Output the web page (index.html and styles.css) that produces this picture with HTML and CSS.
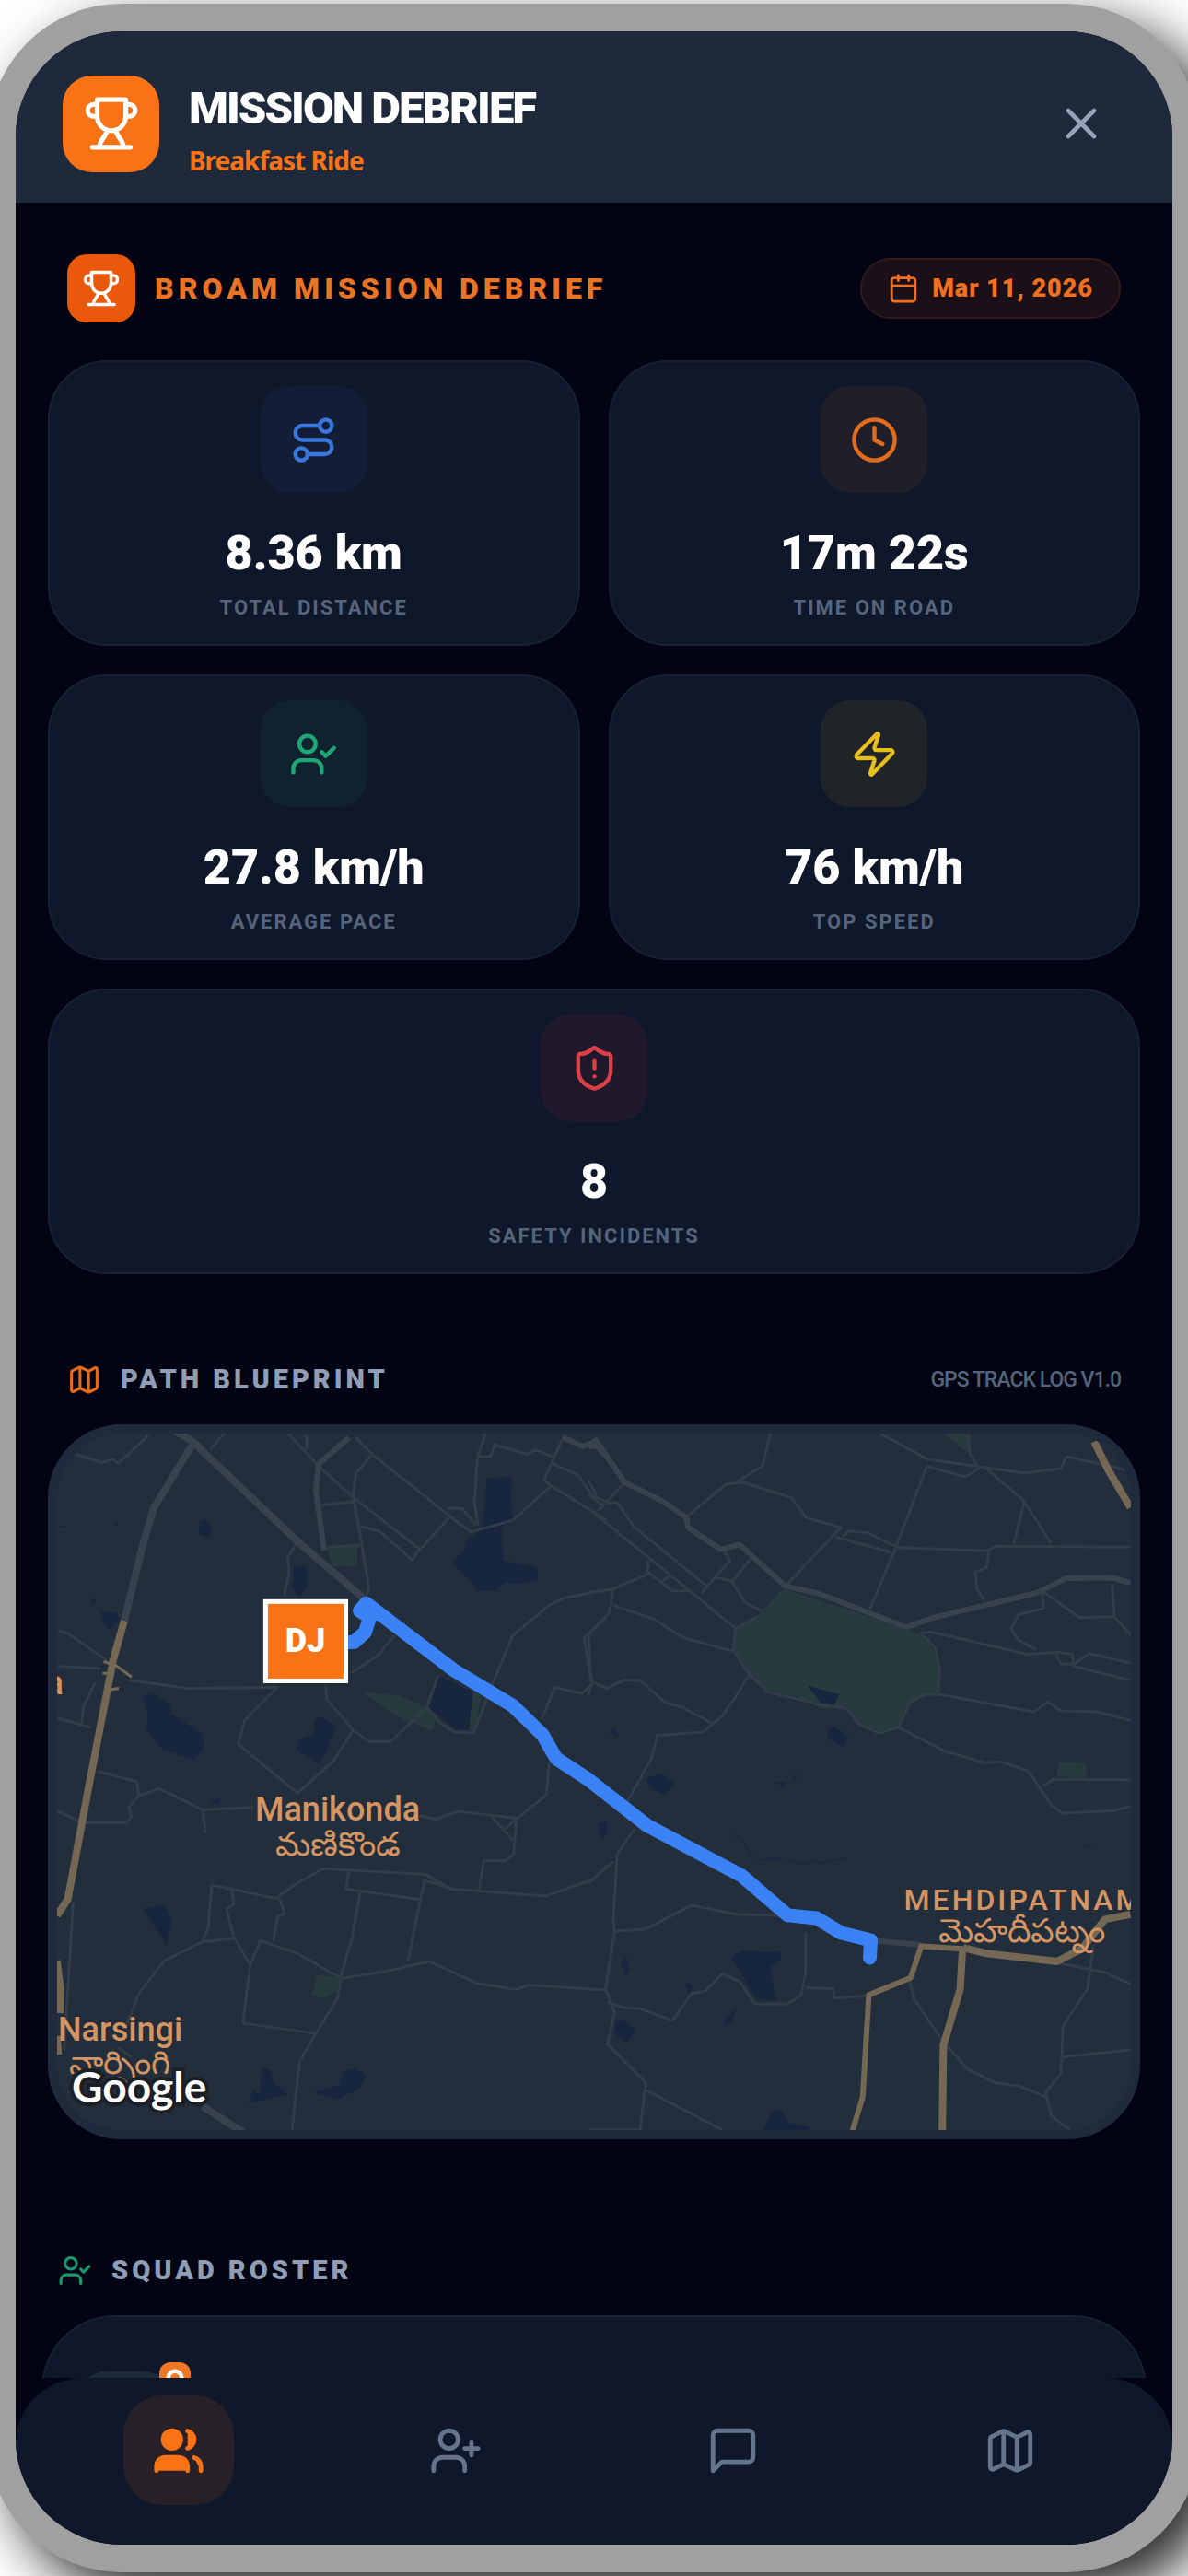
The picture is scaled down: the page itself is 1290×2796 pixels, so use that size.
FILE: index.html
```html
<!DOCTYPE html>
<html lang="en">
<head>
  <meta charset="utf-8">
  <meta name="viewport" content="width=device-width, initial-scale=1">
  <title>Mission Debrief</title>
  <link rel="stylesheet" href="styles.css">
</head>
<body>
  <!-- shared icons -->
  <svg class="sprite" aria-hidden="true">
    <symbol id="trophy" viewBox="0 0 24 24">
      <path d="M6 9H4.5a2.5 2.5 0 0 1 0-5H6M18 9h1.5a2.5 2.5 0 0 0 0-5H18M4 22h16M18 2H6v7a6 6 0 0 0 12 0V2ZM10 14.7c0 3.3-3 3.6-3 7.3M14 14.7c0 3.3 3 3.6 3 7.3"/>
    </symbol>
    <symbol id="map" viewBox="0 0 24 24">
      <path d="M14.106 5.553a2 2 0 0 0 1.788 0l3.659-1.83A1 1 0 0 1 21 4.619v12.764a1 1 0 0 1-.553.894l-4.553 2.277a2 2 0 0 1-1.788 0l-4.212-2.106a2 2 0 0 0-1.788 0l-3.659 1.83A1 1 0 0 1 3 19.381V6.618a1 1 0 0 1 .553-.894l4.553-2.277a2 2 0 0 1 1.788 0zM15 5.764v15M9 3.236v15"/>
    </symbol>
    <symbol id="user-check" viewBox="0 0 24 24">
      <path d="m16 11 2 2 4-4M16 21v-2a4 4 0 0 0-4-4H6a4 4 0 0 0-4 4v2"/>
      <circle cx="9" cy="7" r="4"/>
    </symbol>
  </svg>

  <div class="device">
    <header class="topbar">
      <span class="logo"><svg class="icon"><use href="#trophy"/></svg></span>
      <div class="titles">
        <h1>MISSION DEBRIEF</h1>
        <p>Breakfast Ride</p>
      </div>
      <button class="close" aria-label="Close">
        <svg class="icon" viewBox="0 0 24 24"><path d="M18 6 6 18M6 6l12 12"/></svg>
      </button>
    </header>

    <main class="content">
      <div class="debrief">
        <span class="logo small"><svg class="icon"><use href="#trophy"/></svg></span>
        <h2>BROAM MISSION DEBRIEF</h2>
        <span class="date">
          <svg class="icon" viewBox="0 0 24 24"><path d="M8 2v4M16 2v4M3 10h18"/><rect x="3" y="4" width="18" height="18" rx="2"/></svg>
          Mar 11, 2026
        </span>
      </div>

      <section class="stats">
        <div class="stat">
          <span class="tile blue">
            <svg class="icon" viewBox="0 0 24 24"><circle cx="6" cy="19" r="3"/><path d="M9 19h8.5a3.5 3.5 0 0 0 0-7h-11a3.5 3.5 0 0 1 0-7H15"/><circle cx="18" cy="5" r="3"/></svg>
          </span>
          <strong>8.36 km</strong>
          <small>TOTAL DISTANCE</small>
        </div>
        <div class="stat">
          <span class="tile orange">
            <svg class="icon" viewBox="0 0 24 24"><circle cx="12" cy="12" r="10"/><path d="M12 6v6l4 2"/></svg>
          </span>
          <strong>17m 22s</strong>
          <small>TIME ON ROAD</small>
        </div>
        <div class="stat">
          <span class="tile green"><svg class="icon"><use href="#user-check"/></svg></span>
          <strong>27.8 km/h</strong>
          <small>AVERAGE PACE</small>
        </div>
        <div class="stat">
          <span class="tile yellow">
            <svg class="icon" viewBox="0 0 24 24"><path d="M4 14a1 1 0 0 1-.78-1.63l9.9-10.2a.5.5 0 0 1 .86.46l-1.92 6.02A1 1 0 0 0 13 10h7a1 1 0 0 1 .78 1.63l-9.9 10.2a.5.5 0 0 1-.86-.46l1.92-6.02A1 1 0 0 0 11 14z"/></svg>
          </span>
          <strong>76 km/h</strong>
          <small>TOP SPEED</small>
        </div>
        <div class="stat wide">
          <span class="tile red">
            <svg class="icon" viewBox="0 0 24 24"><path d="M20 13c0 5-3.5 7.5-7.66 8.95a1 1 0 0 1-.67-.01C7.5 20.5 4 18 4 13V6a1 1 0 0 1 1-1c2 0 4.5-1.2 6.24-2.72a1.17 1.17 0 0 1 1.52 0C14.51 3.81 17 5 19 5a1 1 0 0 1 1 1zM12 8v4M12 16h.01"/></svg>
          </span>
          <strong>8</strong>
          <small>SAFETY INCIDENTS</small>
        </div>
      </section>

      <section class="path">
        <div class="section-head">
          <svg class="icon orange"><use href="#map"/></svg>
          <h3>PATH BLUEPRINT</h3>
          <span class="version">GPS TRACK LOG V1.0</span>
        </div>

        <div class="map">
          <svg viewBox="0 0 1164 755" role="img" aria-label="Ride path on map">
            <!-- west half -->
            <g transform="translate(-24 -26) scale(.3954 .5102)">
              <path class="park" d="M800 290 885 290 882 332 815 333ZM897 600 1000 608 1075 632 1098 658 1090 682 990 650ZM1200 600 1225 605 1205 680 1190 680ZM775 1200 835 1208 830 1235 790 1250 757 1243Z"/>
              <path class="water" d="M1240 145 1308 143 1305 200 1313 235 1280 250 1285 320 1375 335 1380 360 1330 370 1290 368 1262 385 1215 385 1190 360 1140 325 1175 300 1185 275 1225 255Z
                M450 240 465 232 488 255 478 272 450 265ZM710 330 748 335 745 375 725 400 705 375ZM180 430 225 430 230 450 205 468 185 450Z
                M295 610 330 603 375 630 370 645 460 690 462 720 435 742 350 722 305 680 310 650ZM1100 565 1135 575 1200 600 1190 680 1150 678 1080 632Z
                M765 660 785 652 825 670 800 725 780 753 715 720 725 700 765 690ZM295 1060 355 1052 375 1080 362 1138Z
                M585 1472 600 1445 615 1455 625 1400 645 1400 655 1430 695 1455ZM765 1450 835 1435 845 1405 880 1397 910 1415 890 1440 830 1465ZM1545 880 1568 875 1568 905 1550 905Z
                M62 245 90 250 70 252ZM215 240 230 240 220 250ZM152 400 168 405 158 418ZM480 832 515 825 500 838Z"/>
              <path class="road" d="M110 95 185 112 215 105 228 115 310 55M480 85 520 50M695 52 778 120 870 185 1053 295 1035 320 945 258 890 248M745 85 745 55M778 120 860 60M785 203 878 195M925 95 880 135 872 185 890 260 915 375 908 400M805 292 890 288M1053 300 1135 230M880 60 925 95 1135 225 1195 260 1310 235 1415 162 1568 235M1235 52 1213 100 1205 200 1215 245M1130 210 1170 210 1210 245M1213 100 1250 100 1260 75 1350 95 1370 85 1420 100M1445 65 1395 150 1415 162M1420 115 1490 140 1530 185 1568 195
                M720 280 693 315 697 345 683 395M255 575 420 592 665 590 575 660 557 710 720 815 820 745 872 680 915 705 975 705 1075 632 1105 565M797 585 800 615 872 680M865 560 940 522 985 480M1075 632 1110 665 1150 685 1203 687 1250 590 1310 480 1410 415 1450 400 1568 383
                M62 470 90 475 200 535M62 545 180 550M165 580 133 630 128 668M62 655 155 675M170 768 280 790 285 820 257 845 265 865 250 877 130 877 62 853M285 820 340 805 460 850 467 900M465 850 600 845M1055 862 1100 870 1160 853 1320 868M1250 862 1310 915M1290 890 1322 868 1402 818 1410 750M1320 868 1312 945 1290 958 1230 958 1218 1020M1390 655 1425 590 1500 603 1530 580 1568 592M1525 580 1505 485 1568 440
                M105 1045 80 1360M230 1355 265 1375M250 1310 285 1240 355 1170 460 1130 550 1123M460 1130 475 1100 485 1010 660 1038 720 1005 790 975 1070 987 1140 1018 1400 1033 1530 998 1568 970M540 1020 545 1050 525 1060 545 1120 590 1180 618 1128 720 1155 840 1208 960 1193 1080 1172 1210 1218 1320 1232 1350 1222 1568 1233M670 1038 685 1070 665 1078 653 1130M590 1180 570 1303 770 1325 725 1385 705 1530M770 1325 830 1250 840 1200 870 1120 892 1022M862 978 852 1018 1052 1040M1022 1172 1068 1000 1145 1018"/>
              <path class="road mid" d="M860 60 778 115 770 170 793 300M1445 58 1500 78 1530 70 1568 100"/>
              <path class="road big" d="M385 45 435 70 720 280 900 400M435 70 325 210 295 290 245 448M460 1480 570 1535"/>
              <path class="highway" d="M188 535 225 545 265 568M185 560 200 560M205 595 230 592"/>
              <path class="highway big" d="M245 448 215 530 150 790 90 1040 60 1075M60 1170 70 1230 68 1282M60 1330 64 1370"/>
            </g>

            <!-- east half -->
            <g transform="translate(576 -26) scale(.4146 .5102)">
              <path class="park" d="M508 380 830 465 890 490 915 540 920 605 880 605 835 625 805 675 760 685 710 670 675 635 610 635 540 608 470 597 420 560 378 510 385 465 440 440ZM930 52 998 52 998 95ZM1228 748 1300 752 1303 782 1225 780Z"/>
              <path class="water" d="M572 585 655 605 640 632 610 625ZM625 678 645 672 680 695 668 717 628 700ZM150 785 190 772 228 795 195 818 165 805ZM55 690 68 675 80 695ZM25 880 50 872 40 910 28 900ZM485 790 520 790 505 800ZM530 777 550 777 542 784Z
                M372 1165 400 1150 500 1152 505 1165 475 1185 490 1255 435 1250 405 1205 390 1185ZM85 1175 100 1163 108 1190 98 1203ZM248 1213 275 1225 262 1242ZM70 1300 90 1295 125 1320 100 1345 68 1325ZM352 1300 388 1268 378 1295 362 1307ZM455 1532 480 1490 505 1487 525 1515 580 1525 575 1532Z"/>
              <path class="stream" d="M372 900 400 912 435 958 495 952 560 967 590 958 610 963 670 952M1290 932 1335 922"/>
              <path class="road" d="M0 180 30 200 75 197 120 250 310 375M0 150 25 190M25 215 95 155M475 52 455 120 385 155M260 225 360 158 405 155 530 187 570 230 660 250 515 375M645 270 790 303M665 270 680 258 730 262 810 293 1040 300 1065 290 1417 292M765 52 885 105 1140 135 1235 125 1250 100 1417 130M990 55 998 95 1020 125 985 143 885 120 800 300 735 425M1040 125 1140 195 1210 285M1140 195 1112 285M1048 300 1040 335 1012 345 1015 380 1035 405
                M355 300 370 320 295 390M330 355 375 365 425 315M375 365 410 410 455 428M155 320 155 345 220 385 265 385M155 350 60 382 0 388M190 368 215 350M0 210 385 465M440 440 385 465 378 510 420 562 385 610 350 650 300 685 180 692 165 740 100 835M65 415 170 445 250 485 378 513M65 385 55 430 0 478 5 560 10 580 0 605M10 580 50 592 90 575 135 575 200 622 245 632 320 665
                M420 562 470 600 600 625 675 635 710 670 760 687 810 675 840 622 880 605 920 605 1165 642 1200 620 1235 640 1330 642 1417 660M810 675 930 725 1035 750 1080 748 1150 768 1210 840 1240 857 1375 852 1417 843M1188 800 1215 785 1417 786M915 600 918 545 905 505 870 475 895 472 1150 520 1230 515 1265 520 1270 545 1417 575M1170 510 1125 490 1105 465 1125 435 1190 422 1185 385 1285 442 1375 440 1417 478M1370 370 1375 440M1220 515 1235 540 1270 540 1310 518 1417 538
                M120 890 75 945 65 1080 68 1110 45 1230 68 1280 50 1348 150 1430 135 1530 0 1530M0 1005 65 960M68 1108 150 1103 270 1053 385 1072 520 1075M0 1232 48 1232M50 1258 90 1270 135 1272 220 1297 270 1240 305 1235 350 1198 395 1215 435 1262 520 1262 555 1245 567 1200 568 1110M568 1228 640 1230 642 1250 730 1245M150 1445 350 1530M840 1215 850 1250 930 1345 990 1400 1065 1430 1130 1437 1195 1460M1320 1140 1305 1230 1240 1310 1238 1370 1235 1410 1195 1450 1210 1500 1260 1530M1240 1375 1417 1360M1230 1175 1350 1195 1417 1220"/>
              <path class="road mid" d="M0 80 25 75M15 60 95 155 195 195 257 230 260 250 345 297 395 287 515 375 600 390 830 462 910 440 1170 390 1250 358 1370 357 1417 368M750 1128 870 1137"/>
              <path class="highway mid" d="M690 1532 717 1460 733 1243 842 1207 870 1140 980 1145"/>
              <path class="highway big" d="M980 1143 1040 1155 1225 1172 1290 1145 1350 1083 1417 1072M978 1145 972 1230 928 1350 925 1532M1322 68 1360 130 1417 208"/>
            </g>

            <text class="place" x="304" y="419" text-anchor="middle">Manikonda</text>
            <text class="place telugu" x="304" y="457" text-anchor="middle">మణికొండ</text>
            <text class="place" x="1" y="658">Narsingi</text>
            <text class="place telugu" x="68" y="694" text-anchor="middle">నార్సింగి</text>
            <text class="place" x="7" y="283" text-anchor="end">a</text>
            <text class="place caps" x="918" y="516">MEHDIPATNAM</text>
            <text class="place telugu" x="1046" y="551" text-anchor="middle">మెహదీపట్నం</text>

            <polyline class="route" points="314,226 322,226 334,215 339,199 328,192 335,184 431,257 494,295 526,326 541,352 576,375 640,425 742,479 792,522 823,525 850,541 882,549 881,568"/>
            <rect class="marker" x="226" y="182" width="87" height="86"/>
            <text class="initials" x="269" y="237" text-anchor="middle">DJ</text>
            <text class="google" x="16" y="725">Google</text>
          </svg>
        </div>
      </section>

      <section class="squad">
        <div class="section-head">
          <svg class="icon green"><use href="#user-check"/></svg>
          <h3>SQUAD ROSTER</h3>
        </div>
        <div class="roster">
          <div class="avatar">
            <span class="rank"><svg class="icon" viewBox="0 0 24 24"><circle cx="12" cy="12" r="8"/></svg></span>
          </div>
        </div>
      </section>
    </main>

    <nav class="tabs">
      <button class="active" aria-label="Squad">
        <svg class="icon" viewBox="0 0 24 24"><path d="M16 21v-2a4 4 0 0 0-4-4H6a4 4 0 0 0-4 4v2"/><circle cx="9" cy="7" r="4"/><path d="M22 21v-2a4 4 0 0 0-3-3.87M16 3.13a4 4 0 0 1 0 7.75"/></svg>
      </button>
      <button aria-label="Invite">
        <svg class="icon" viewBox="0 0 24 24"><path d="M16 21v-2a4 4 0 0 0-4-4H6a4 4 0 0 0-4 4v2M19 8v6M22 11h-6"/><circle cx="9" cy="7" r="4"/></svg>
      </button>
      <button aria-label="Chat">
        <svg class="icon" viewBox="0 0 24 24"><path d="M21 15a2 2 0 0 1-2 2H7l-4 4V5a2 2 0 0 1 2-2h14a2 2 0 0 1 2 2z"/></svg>
      </button>
      <button aria-label="Map"><svg class="icon"><use href="#map"/></svg></button>
    </nav>
  </div>
</body>
</html>
```

FILE: styles.css
```css
* {
  box-sizing: border-box;
  margin: 0;
  padding: 0;
}

body {
  background: #fff;
  font-family: Roboto, "Liberation Sans", sans-serif;
  overflow: hidden;
}

button {
  border: 0;
  background: none;
  cursor: pointer;
}

.sprite {
  display: none;
}

.icon {
  display: block;
  flex-shrink: 0;
  fill: none;
  stroke: currentColor;
  stroke-width: 2;
  stroke-linecap: round;
  stroke-linejoin: round;
}

.device {
  display: flex;
  flex-direction: column;
  height: calc(100vh - 8px);
  margin: 4px -13px;
  border: 30px solid #a0a0a0;
  border-radius: 145px;
  background: #020414;
  box-shadow: 24px 24px 60px rgba(0, 0, 0, 0.85);
  overflow: hidden;
}

/* top bar */
.topbar {
  display: flex;
  align-items: center;
  gap: 32px;
  padding: 42px 71px 28px 51px;
  background: #1e293b;
}

.logo {
  display: flex;
  align-items: center;
  justify-content: center;
  width: 105px;
  height: 105px;
  border-radius: 32px;
  background: #f97316;
  color: #fff;
}

.logo .icon {
  width: 62px;
  height: 62px;
}

.titles {
  flex: 1;
  padding-top: 14px;
}

.titles h1 {
  font-size: 49px;
  line-height: 56px;
  font-weight: 900;
  letter-spacing: -2px;
  color: #fff;
}

.titles p {
  margin-top: 10px;
  font-family: "Noto Sans", sans-serif;
  font-size: 28px;
  line-height: 36px;
  font-weight: 700;
  letter-spacing: -1px;
  color: #f97316;
}

.close {
  color: #94a3b8;
}

.close .icon {
  width: 56px;
  height: 56px;
}

/* page content */
.content {
  flex: 1;
  min-height: 0;
  overflow: hidden;
  padding: 56px 35px 0;
}

.debrief {
  display: flex;
  align-items: center;
  gap: 21px;
  padding: 0 21px;
  margin-bottom: 41px;
}

.logo.small {
  width: 74px;
  height: 74px;
  border-radius: 21px;
  background: #ea580c;
}

.logo.small .icon {
  width: 42px;
  height: 42px;
}

.debrief h2 {
  flex: 1;
  font-size: 32px;
  font-weight: 900;
  letter-spacing: 5px;
  color: #e97426;
}

.date {
  display: flex;
  align-items: center;
  gap: 14px;
  padding: 14px 28px;
  border: 2px solid #34191a;
  border-radius: 33px;
  background: #1b0f18;
  color: #f07020;
  font-size: 27px;
  line-height: 33px;
  font-weight: 900;
  letter-spacing: 1px;
}

.date .icon {
  width: 34px;
  height: 34px;
}

/* stats */
.stats {
  display: grid;
  grid-template-columns: 1fr 1fr;
  gap: 31px;
}

.stat {
  display: flex;
  flex-direction: column;
  align-items: center;
  padding: 26px;
  border: 2px solid #172133;
  border-radius: 64px;
  background: #0f172a;
}

.stat.wide {
  grid-column: span 2;
}

.stat strong {
  margin-top: 36px;
  font-size: 52px;
  line-height: 60px;
  font-weight: 900;
  color: #fff;
}

.stat small {
  margin-top: 16px;
  font-size: 22px;
  line-height: 26px;
  font-weight: 700;
  letter-spacing: 2px;
  color: #56647b;
}

.tile {
  display: flex;
  align-items: center;
  justify-content: center;
  width: 116px;
  height: 116px;
  border-radius: 32px;
}

.tile .icon {
  width: 53px;
  height: 53px;
}

.tile.blue {
  background: #121e37;
  color: #3b76dc;
}

.tile.orange {
  background: #201e29;
  color: #e26c1e;
}

.tile.green {
  background: #10212f;
  color: #1fa676;
}

.tile.yellow {
  background: #202429;
  color: #e8be1c;
}

.tile.red {
  background: #20192b;
  color: #dc4046;
}

/* section headings */
.section-head {
  display: flex;
  align-items: center;
  gap: 21px;
  padding: 0 21px;
  margin-bottom: 30px;
}

.section-head .icon {
  width: 37px;
  height: 37px;
}

.section-head .orange {
  color: #e96b16;
}

.section-head .green {
  color: #1b9a70;
}

.section-head h3 {
  flex: 1;
  font-size: 29px;
  line-height: 37px;
  font-weight: 900;
  letter-spacing: 4px;
  color: #8f9eb5;
}

.version {
  font-size: 23px;
  font-weight: 500;
  letter-spacing: -1px;
  color: #56647b;
}

/* map */
.path {
  margin-top: 96px;
}

.map {
  border: 10px solid #1f2a3c;
  border-radius: 80px;
  background: #232e3c;
  overflow: hidden;
}

.map svg {
  display: block;
  width: 100%;
}

.map path {
  vector-effect: non-scaling-stroke;
}

.park {
  fill: #273b3e;
}

.water {
  fill: #18253e;
}

.stream {
  fill: none;
  stroke: #1b2a40;
  stroke-width: 2;
}

.road,
.highway {
  fill: none;
  stroke: #323c49;
  stroke-width: 3;
  stroke-linejoin: round;
}

.road.mid,
.highway.mid {
  stroke-width: 6;
}

.road.big,
.highway.big {
  stroke-width: 8;
}

.road.mid,
.road.big {
  stroke: #38424e;
}

.highway,
.highway.mid,
.highway.big {
  stroke: #746855;
}

.place {
  fill: #d59563;
  font-size: 36px;
  font-weight: 500;
}

.place.caps {
  font-size: 32px;
  letter-spacing: 3px;
}

.place.telugu {
  font-weight: 400;
}

.route {
  fill: none;
  stroke: #3b82f6;
  stroke-width: 15;
  stroke-linecap: round;
  stroke-linejoin: round;
}

.marker {
  fill: #f97316;
  stroke: #fff;
  stroke-width: 5;
}

.initials {
  fill: #fff;
  font-size: 36px;
  font-weight: 900;
}

.google {
  fill: #fff;
  stroke: #1c2026;
  stroke-width: 8;
  paint-order: stroke;
  font-family: Lato, sans-serif;
  font-size: 46px;
  font-weight: 700;
}

/* squad */
.squad {
  margin: 124px -7px 0;
}

.squad .section-head {
  padding: 0 18px;
}

.roster {
  padding: 59px 36px;
  border: 2px solid #172133;
  border-radius: 80px;
  background: #0f172a;
}

.avatar {
  position: relative;
  width: 105px;
  height: 105px;
  border-radius: 32px;
  background: #1e293b;
}

.rank {
  position: absolute;
  top: -10px;
  right: -19px;
  padding: 6px;
  border-radius: 12px;
  background: #ee7725;
  color: #fff;
}

.rank .icon {
  width: 22px;
  height: 22px;
  stroke-width: 5;
}

/* bottom tabs */
.tabs {
  display: flex;
  justify-content: space-around;
  padding: 19px 26px 43px;
  border-radius: 72px 72px 0 0;
  background: #0f172a;
}

.tabs button {
  display: flex;
  align-items: center;
  justify-content: center;
  width: 120px;
  height: 119px;
  border-radius: 42px;
  color: #64748b;
}

.tabs .icon {
  width: 58px;
  height: 58px;
}

.tabs .active {
  background: #272027;
  color: #f97316;
}

.tabs .active .icon {
  fill: currentColor;
}
```
